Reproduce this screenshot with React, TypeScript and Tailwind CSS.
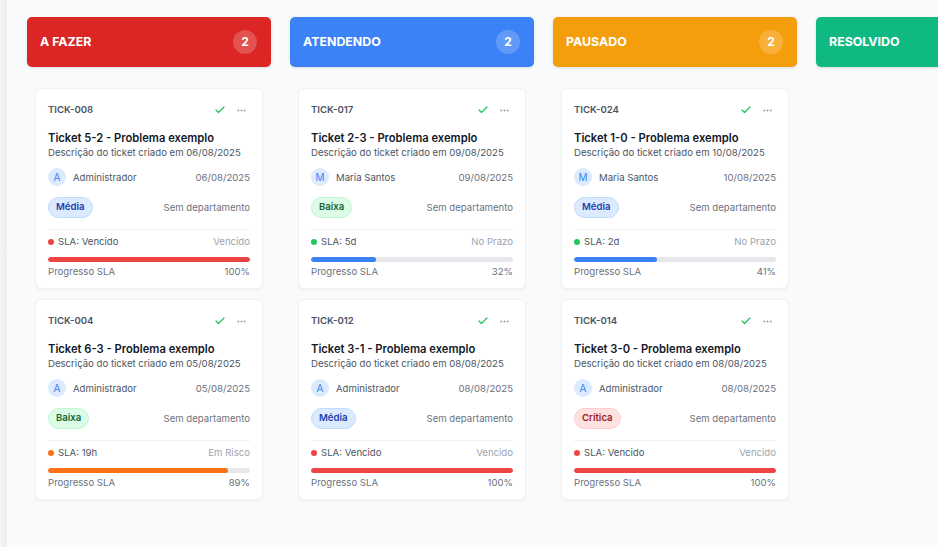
import { Check, MoreHorizontal } from "lucide-react";

type Ticket = {
  code: string;
  title: string;
  date: string;
  user: string;
  priority: "Média" | "Baixa" | "Crítica";
  sla: string;
  status: "Vencido" | "No Prazo" | "Em Risco";
  progress: number;
};

const columns: {
  title: string;
  color: string;
  badge: string;
  tickets: Ticket[];
}[] = [
  {
    title: "A FAZER",
    color: "bg-[#dc2626]",
    badge: "2",
    tickets: [
      { code: "TICK-008", title: "Ticket 5-2 - Problema exemplo", date: "06/08/2025", user: "Administrador", priority: "Média", sla: "SLA: Vencido", status: "Vencido", progress: 100 },
      { code: "TICK-004", title: "Ticket 6-3 - Problema exemplo", date: "05/08/2025", user: "Administrador", priority: "Baixa", sla: "SLA: 19h", status: "Em Risco", progress: 89 },
    ],
  },
  {
    title: "ATENDENDO",
    color: "bg-[#3b82f6]",
    badge: "2",
    tickets: [
      { code: "TICK-017", title: "Ticket 2-3 - Problema exemplo", date: "09/08/2025", user: "Maria Santos", priority: "Baixa", sla: "SLA: 5d", status: "No Prazo", progress: 32 },
      { code: "TICK-012", title: "Ticket 3-1 - Problema exemplo", date: "08/08/2025", user: "Administrador", priority: "Média", sla: "SLA: Vencido", status: "Vencido", progress: 100 },
    ],
  },
  {
    title: "PAUSADO",
    color: "bg-[#f59e0b]",
    badge: "2",
    tickets: [
      { code: "TICK-024", title: "Ticket 1-0 - Problema exemplo", date: "10/08/2025", user: "Maria Santos", priority: "Média", sla: "SLA: 2d", status: "No Prazo", progress: 41 },
      { code: "TICK-014", title: "Ticket 3-0 - Problema exemplo", date: "08/08/2025", user: "Administrador", priority: "Crítica", sla: "SLA: Vencido", status: "Vencido", progress: 100 },
    ],
  },
  {
    title: "RESOLVIDO",
    color: "bg-[#10b981]",
    badge: "",
    tickets: [],
  },
];

const priorityStyles = {
  Média: "bg-[#dbeafe] border-[#bfdbfe] text-[#1e40af]",
  Baixa: "bg-[#dcfce7] border-[#bbf7d0] text-[#166534]",
  Crítica: "bg-[#fee2e2] border-[#fecaca] text-[#991b1b]",
};

const statusDot = {
  Vencido: "bg-[#ef4444]",
  "No Prazo": "bg-[#22c55e]",
  "Em Risco": "bg-[#f97316]",
};

const statusBar = {
  Vencido: "bg-[#ef4444]",
  "No Prazo": "bg-[#3b82f6]",
  "Em Risco": "bg-[#f97316]",
};

function TicketCard({ t }: { t: Ticket }) {
  return (
    <div className="bg-white rounded-[6px] shadow-[0_1px_2px_rgba(0,0,0,0.06)] border border-[#f1f2f4] px-[12px] pt-[14px] pb-[10px]">
      <div className="flex items-center justify-between h-[14px]">
        <span className="text-[9.6px] font-semibold text-[#4b5563] leading-[14px]">{t.code}</span>
        <div className="flex items-center gap-[10px] pr-[3px]">
          <Check className="w-[12px] h-[12px] text-[#22c55e]" strokeWidth={2.5} />
          <MoreHorizontal className="w-[11px] h-[11px] text-[#9ca3af]" strokeWidth={2.5} />
        </div>
      </div>
      <div className="mt-[14px] text-[11.2px] font-semibold text-[#111827] leading-[15px]">{t.title}</div>
      <div className="text-[9.6px] text-[#4b5563] leading-[13px]">
        Descrição do ticket criado em {t.date}
      </div>
      <div className="mt-[9px] flex items-center justify-between">
        <div className="flex items-center gap-[7px]">
          <div className="w-[18px] h-[18px] rounded-full bg-[#dbeafe] text-[#3b82f6] text-[10px] flex items-center justify-center">
            {t.user[0]}
          </div>
          <span className="text-[9.6px] text-[#4b5563] leading-[13px]">{t.user}</span>
        </div>
        <span className="text-[9.6px] text-[#6b7280] leading-[13px]">{t.date}</span>
      </div>
      <div className="mt-[11px] flex items-center justify-between">
        <span className={`px-[7px] h-[21px] flex items-center rounded-full border text-[9.6px] font-semibold ${priorityStyles[t.priority]}`}>
          {t.priority}
        </span>
        <span className="text-[9.6px] text-[#6b7280] leading-[13px]">Sem departamento</span>
      </div>
      <div className="mt-[11px] border-t border-[#f0f1f3] pt-[5px]">
        <div className="flex items-center justify-between leading-[13px]">
          <div className="flex items-center gap-[4px]">
            <span className={`w-[6px] h-[6px] rounded-full ${statusDot[t.status]}`} />
            <span className="text-[9.6px] text-[#4b5563]">{t.sla}</span>
          </div>
          <span className="text-[9.6px] text-[#9ca3af]">{t.status}</span>
        </div>
        <div className="mt-[9px] h-[5px] rounded-full bg-[#e5e7eb] overflow-hidden">
          <div className={`h-full rounded-full ${statusBar[t.status]}`} style={{ width: `${t.progress}%` }} />
        </div>
        <div className="mt-[3px] flex items-center justify-between text-[9.6px] text-[#6b7280] leading-[13px]">
          <span>Progresso SLA</span>
          <span>{t.progress}%</span>
        </div>
      </div>
    </div>
  );
}

export default function App() {
  return (
    <div
      className="flex h-screen w-full overflow-hidden bg-[#f9fafb]"
      style={{ fontFamily: "Inter, 'Noto Sans', sans-serif" }}
    >
      <div className="w-[7px] shrink-0 bg-gradient-to-r from-[#f5f6f7] to-[#eceef0]" />
      <div className="flex gap-[19px] pl-[20px] pt-[17px]">
        {columns.map((col) => (
          <div key={col.title} className="w-[244px] shrink-0">
            <div className={`${col.color} h-[50px] rounded-[5px] shadow-[0_1px_3px_rgba(0,0,0,0.12)] flex items-center justify-between pl-[13px] pr-[14px]`}>
              <span className="text-white text-[12.4px] font-bold">{col.title}</span>
              {col.badge && (
                <span className="w-[24px] h-[24px] rounded-full bg-white/20 text-white text-[12px] font-bold flex items-center justify-center">
                  {col.badge}
                </span>
              )}
            </div>
            <div className="mt-[21px] px-[8px] flex flex-col gap-[10px]">
              {col.tickets.map((t) => (
                <TicketCard key={t.code} t={t} />
              ))}
            </div>
          </div>
        ))}
      </div>
    </div>
  );
}
